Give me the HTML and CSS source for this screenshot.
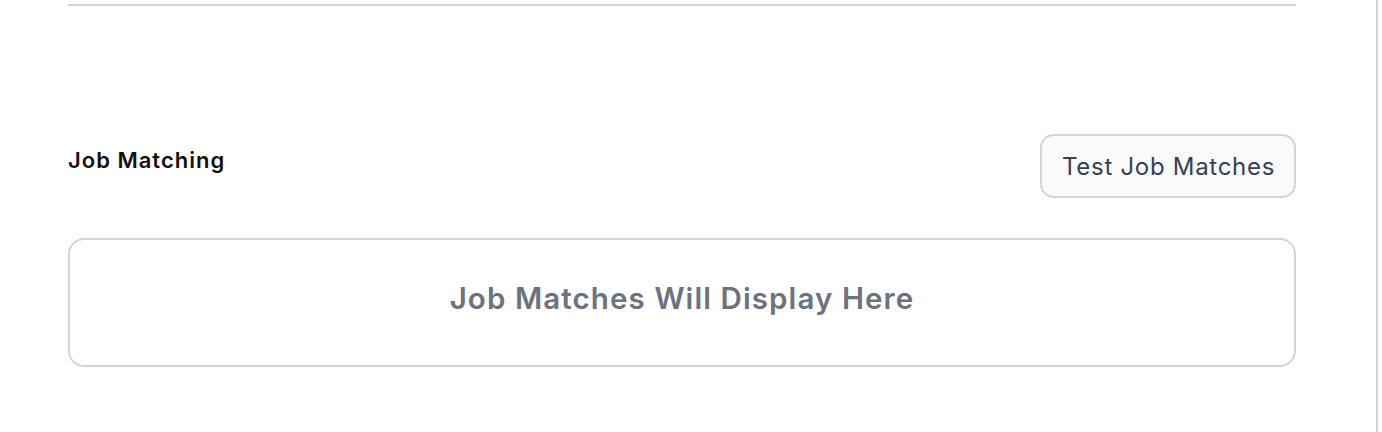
FILE: index.html
```html
<!DOCTYPE html>
<html>
<head>
<meta charset="utf-8">
<link rel="stylesheet" href="styles.css">
</head>
<body>
<div class="page">
  <div class="content">
    <div class="rule"></div>
    <div class="section-head">
      <h2 class="section-title">Job Matching</h2>
      <button class="btn">Test Job Matches</button>
    </div>
    <div class="placeholder">Job Matches Will Display Here</div>
  </div>
</div>
</body>
</html>
```
FILE: styles.css
```css
html, body {
  margin: 0;
  padding: 0;
  background: #ffffff;
  font-family: Inter, "Noto Sans", sans-serif;
}
.page {
  width: 1376px;
  height: 432px;
  border-right: 2px solid #d1d5db;
  box-sizing: content-box;
}
.content {
  padding: 4px 80px 0 68px;
  display: flex;
  flex-direction: column;
}
.rule {
  height: 2px;
  background: #d1d5db;
}
.section-head {
  margin-top: 128px;
  display: flex;
  justify-content: space-between;
  align-items: flex-start;
}
.section-title {
  margin: 12px 0 0 0;
  font-size: 22px;
  line-height: 28px;
  font-weight: 600;
  letter-spacing: 1px;
  color: #111111;
}
.btn {
  height: 64px;
  padding: 0 19px 0 20px;
  border: 2px solid #d1d5db;
  border-radius: 14px;
  background: #f9fafb;
  color: #374151;
  font-family: Inter, "Noto Sans", sans-serif;
  font-size: 24px;
  font-weight: 400;
  letter-spacing: 0.7px;
}
.placeholder {
  margin-top: 40px;
  height: 115px;
  padding-bottom: 10px;
  box-sizing: content-box;
  border: 2px solid #d1d5db;
  border-radius: 16px;
  display: flex;
  align-items: center;
  justify-content: center;
  color: #6b7280;
  font-size: 29.5px;
  font-weight: 600;
  letter-spacing: 1.1px;
}
```
